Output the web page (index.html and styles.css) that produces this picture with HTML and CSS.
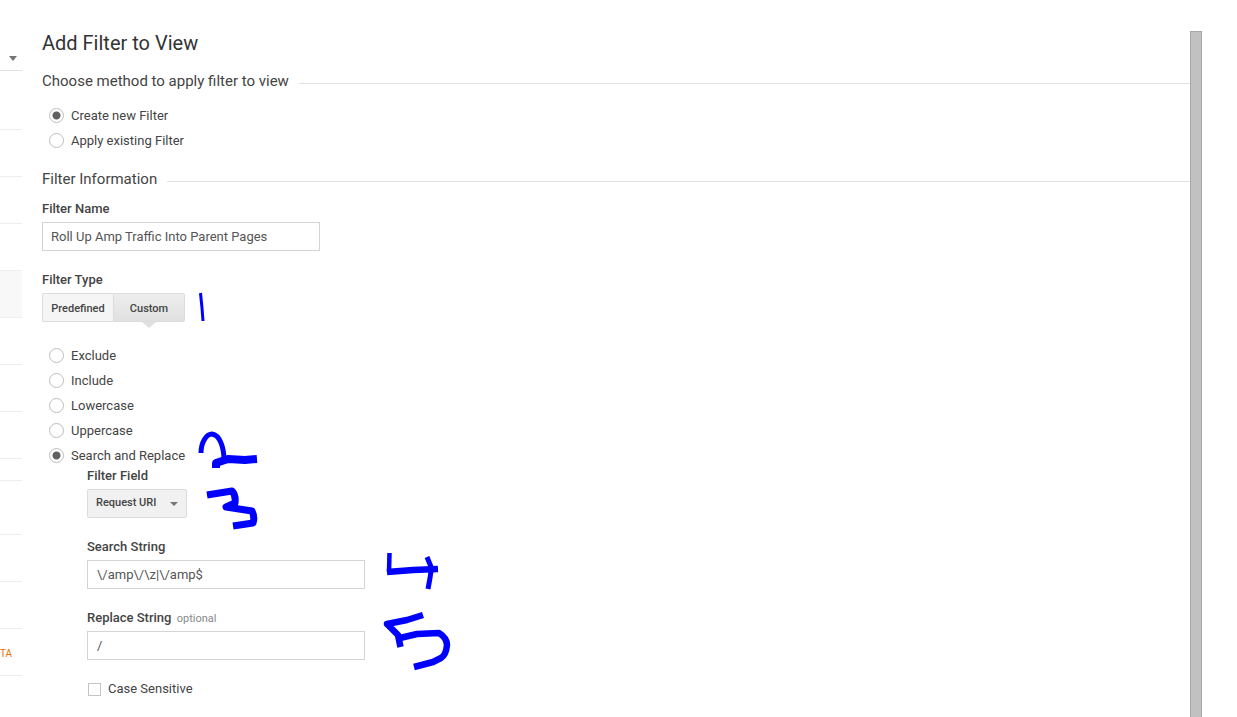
FILE: index.html
```html
<!DOCTYPE html>
<html lang="en">
<head>
    <meta charset="UTF-8">
    <meta name="viewport" content="width=device-width, initial-scale=1.0">
    <title>Add Filter to View</title>
    <link rel="stylesheet" href="styles.css">
</head>
<body>
    <!-- Clipped side navigation -->
    <nav class="sidenav">
        <div class="nav-row nav-top"><span class="nav-caret"></span></div>
        <div class="nav-row nav-tall"></div>
        <div class="nav-row"></div>
        <div class="nav-row"></div>
        <div class="nav-row"></div>
        <div class="nav-row nav-active"></div>
        <div class="nav-row"></div>
        <div class="nav-row"></div>
        <div class="nav-row"></div>
        <div class="nav-row nav-short"></div>
        <div class="nav-row nav-mid"></div>
        <div class="nav-row"></div>
        <div class="nav-row"></div>
        <div class="nav-row nav-beta"><span class="beta">BETA</span></div>
    </nav>

    <main class="content">
        <h1>Add Filter to View</h1>

        <div class="section-title section-method"><span>Choose method to apply filter to view</span></div>
        <div class="radio-list list-method">
            <label class="radio-row"><input type="radio" name="method" checked>Create new Filter</label>
            <label class="radio-row"><input type="radio" name="method">Apply existing Filter</label>
        </div>

        <div class="section-title section-info"><span>Filter Information</span></div>
        <label class="field-label label-name" for="filterName">Filter Name</label>
        <input class="text-input input-name" type="text" id="filterName" value="Roll Up Amp Traffic Into Parent Pages">

        <div class="field-label label-type">Filter Type</div>
        <div class="toggle">
            <button class="toggle-btn btn-predefined">Predefined</button>
            <button class="toggle-btn btn-custom">Custom</button>
        </div>

        <div class="radio-list list-type">
            <label class="radio-row"><input type="radio" name="type">Exclude</label>
            <label class="radio-row"><input type="radio" name="type">Include</label>
            <label class="radio-row"><input type="radio" name="type">Lowercase</label>
            <label class="radio-row"><input type="radio" name="type">Uppercase</label>
            <label class="radio-row"><input type="radio" name="type" checked>Search and Replace</label>
        </div>

        <div class="details">
            <div class="field-label label-field">Filter Field</div>
            <button class="dropdown">Request URI<span class="dropdown-caret"></span></button>

            <label class="field-label label-search" for="searchString">Search String</label>
            <input class="text-input input-wide" type="text" id="searchString" value="\/amp\/\z|\/amp$">

            <label class="field-label label-replace" for="replaceString">Replace String <span class="optional">optional</span></label>
            <input class="text-input input-wide" type="text" id="replaceString" value="/">

            <label class="check-row"><input type="checkbox">Case Sensitive</label>
        </div>
    </main>

    <div class="scrollbar"></div>

    <!-- Hand drawn numbers on top of the screenshot -->
    <svg class="scribbles" width="1237" height="717" viewBox="0 0 1237 717" fill="none" stroke="#0000ff" stroke-linejoin="round">
        <path stroke-width="3" d="M200.5 293 L202 308 L203 321"/>
        <path stroke-width="5" d="M201 453 C201 443 206 434 212 434 C220 435 224 448 224 460"/>
        <path stroke-width="8" d="M216 468 L216 463 L228 459 L245 460 L257 459"/>
        <path stroke-width="7" d="M207 495 L232 491 Q236 495 235 503 L226 507 L252 511 Q255 517 253 523 L233 526"/>
        <path stroke-width="4.5" d="M389.5 553 L389 572"/>
        <path stroke-width="6.5" d="M387 572 L413 570 L438 569"/>
        <path stroke-width="5" d="M427 557 L431.5 568 L430 578 L428 589"/>
        <path stroke-width="6.5" d="M423 615 L407 620 L387 624 L398 635 L400.5 647"/>
        <path stroke-width="6.5" d="M400 638 L417 634 L439 633 Q447 638 447 645 Q446 655 441 658 L433 662 L414 667"/>
    </svg>
</body>
</html>
```

FILE: styles.css
```css
* {
    box-sizing: border-box;
}

html, body {
    height: 100%;
}

body {
    font-family: 'Roboto', 'Liberation Sans', sans-serif;
    font-size: 13px;
    color: #444;
    margin: 0;
    background-color: #fff;
    display: flex;
    overflow: hidden;
}

/* Side navigation */
.sidenav {
    width: 22px;
    flex-shrink: 0;
    overflow: hidden;
}

.nav-row {
    height: 47px;
    border-bottom: 1px solid #eee;
    display: flex;
    justify-content: flex-end;
}

.nav-top {
    height: 71px;
    border-bottom-color: #e0e0e0;
    padding: 56px 5px 0 0;
}

.nav-tall {
    height: 59px;
}

.nav-short {
    height: 22px;
}

.nav-mid {
    height: 54px;
}

.nav-active {
    background-color: #f8f8f8;
}

.nav-beta {
    align-items: center;
    padding: 2px 10px 0 0;
}

.nav-caret {
    width: 0;
    height: 0;
    border-left: 4px solid transparent;
    border-right: 4px solid transparent;
    border-top: 5px solid #757575;
}

.beta {
    flex-shrink: 0;
    font-size: 10px;
    color: #e8710a;
}

/* Main form */
.content {
    flex: 1;
    min-width: 0;
    padding: 31px 0 0 20px;
}

h1 {
    font-size: 20px;
    font-weight: 400;
    line-height: 24px;
    color: #333;
    margin: 0;
}

.section-title {
    display: flex;
    align-items: center;
    font-size: 15px;
    line-height: 20px;
    color: #444;
    margin-top: 16px;
}

.section-title::after {
    content: "";
    flex: 1;
    height: 1px;
    margin: 4px 0 0 10px;
    background-color: #e0e0e0;
}

.radio-list {
    display: flex;
    flex-direction: column;
    padding-left: 7px;
}

.list-method {
    margin-top: 12px;
}

.list-type {
    margin-top: 21px;
}

.radio-row {
    display: flex;
    align-items: center;
    height: 25px;
}

.radio-row input {
    appearance: none;
    width: 15px;
    height: 15px;
    margin: 0 7px 0 0;
    border: 1px solid #bdbdbd;
    border-radius: 50%;
    background-color: #fff;
}

.radio-row input:checked {
    background: radial-gradient(circle, #616161 0, #616161 3.5px, #fff 4.5px);
}

.field-label {
    display: block;
    font-weight: 500;
    line-height: 16px;
    color: #444;
}

.label-name {
    margin-top: 12px;
}

.label-type {
    margin-top: 21px;
}

.text-input {
    display: block;
    height: 29px;
    padding: 0 8px;
    border: 1px solid #d4d4d4;
    border-radius: 0;
    font-family: inherit;
    font-size: 13px;
    color: #555;
    background-color: #fff;
}

.input-name {
    width: 278px;
    margin-top: 5px;
}

.input-wide {
    width: 278px;
    padding-left: 9px;
}

/* Predefined / Custom toggle */
.toggle {
    display: flex;
    width: 143px;
    height: 29px;
    margin-top: 5px;
}

.toggle-btn {
    height: 29px;
    padding: 1px 0 0;
    border: 1px solid #dcdcdc;
    font-family: inherit;
    font-size: 11px;
    font-weight: 500;
    color: #444;
}

.btn-predefined {
    width: 71px;
    border-right: 0;
    border-radius: 2px 0 0 2px;
    background-color: #f5f5f5;
}

.btn-custom {
    position: relative;
    width: 72px;
    border-radius: 0 2px 2px 0;
    background: linear-gradient(#eee, #e0e0e0);
}

.btn-custom::after {
    content: "";
    position: absolute;
    left: 28px;
    bottom: -7px;
    border-left: 7px solid transparent;
    border-right: 7px solid transparent;
    border-top: 6px solid #e0e0e0;
}

/* Search and Replace details */
.details {
    padding-left: 45px;
}

.dropdown {
    display: flex;
    align-items: center;
    justify-content: space-between;
    width: 100px;
    height: 29px;
    margin-top: 5px;
    padding: 0 8px 2px;
    border: 1px solid #dcdcdc;
    border-radius: 2px;
    background-color: #f1f1f1;
    font-family: inherit;
    font-size: 11px;
    font-weight: 500;
    color: #444;
}

.dropdown-caret {
    width: 0;
    height: 0;
    margin-top: 3px;
    border-left: 4px solid transparent;
    border-right: 4px solid transparent;
    border-top: 4px solid #757575;
}

.label-search {
    margin-top: 21px;
}

.label-search + .text-input {
    margin-top: 5px;
}

.label-replace {
    margin-top: 21px;
}

.label-replace + .text-input {
    margin-top: 4px;
}

.optional {
    font-size: 11px;
    font-weight: 400;
    color: #888;
    margin-left: 2px;
}

.check-row {
    display: flex;
    align-items: center;
    margin-top: 21px;
    line-height: 16px;
}

.check-row input {
    appearance: none;
    width: 13px;
    height: 13px;
    margin: 0 7px 0 1px;
    border: 1px solid #c4c4c4;
    background-color: #fff;
}

/* Scrollbar strip */
.scrollbar {
    width: 12px;
    flex-shrink: 0;
    margin: 31px 35px 0 0;
    background-color: #c1c1c1;
    border: 1px solid #a8a8a8;
    border-bottom: 0;
}

.scribbles {
    position: absolute;
    top: 0;
    left: 0;
    pointer-events: none;
}
```
